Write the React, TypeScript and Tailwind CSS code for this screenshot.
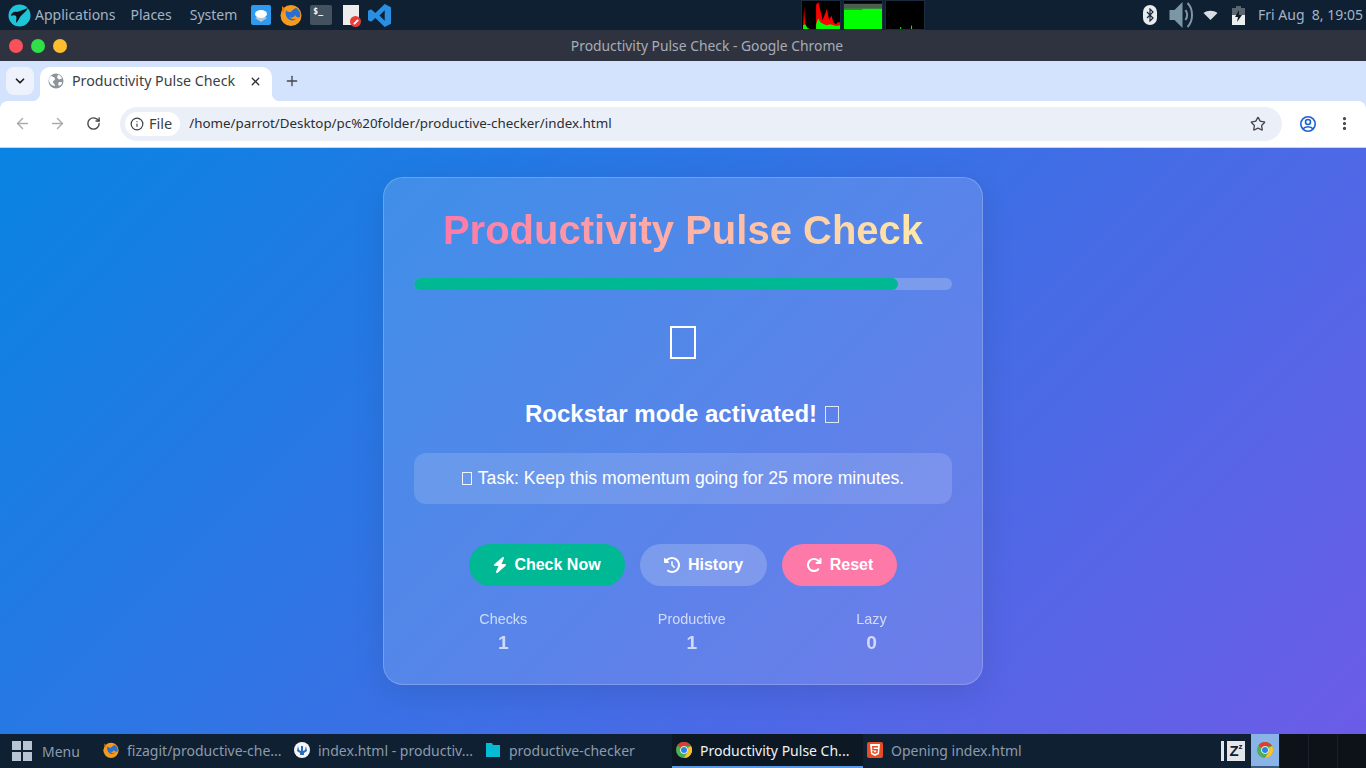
import React from 'react';
import { FaBolt, FaClockRotateLeft, FaArrowRotateRight } from 'react-icons/fa6';
import { ArrowLeft, ArrowRight, RotateCw, Info, Star, EllipsisVertical, ChevronDown, X, Plus } from 'lucide-react';

const ParrotLogo = () => (
  <svg width="23" height="23" viewBox="0 0 23 23" className="shrink-0">
    <circle cx="11.500" cy="11.500" r="11" fill="#1cc5d8" />
    <path d="M3 12c0-3 3-5 6-4 4-1 8-3 11-4-2 4-6 6-8 9-1 2-2 4-4 6 0-3 1-5 0-7-1-1-3-1-5 0z" fill="#10121c" />
  </svg>
);

const FirefoxIcon = ({ size = 22 }: { size?: number }) => (
  <svg width={size} height={size} viewBox="0 0 22 22" className="shrink-0">
    <circle cx="11" cy="11.500" r="10.500" fill="#f59a1c" />
    <path d="M6 6c1 2 3 2 5 2 1-2 3-3 5-4 3 2 5 5 4 9-2 1-4 0-5-2-1 3-4 3-6 2 2 2 6 3 8 1-2 2-4 3-7 2-4-2-5-6-4-10z" fill="#2a6fcf" />
    <path d="M2 2c0 3 0 5 1 7l2-4z" fill="#f07a1a" />
  </svg>
);

const ChromeIcon = ({ size = 16 }: { size?: number }) => (
  <svg width={size} height={size} viewBox="0 0 16 16" className="shrink-0">
    <circle cx="8" cy="8" r="8" fill="#4caf50" />
    <path d="M8 0a8 8 0 0 1 7 4H8a4 4 0 0 0-3.600 2.200L1.600 3A8 8 0 0 1 8 0z" fill="#e53935" />
    <path d="M15 4a8 8 0 0 1-7 12l3.500-6A4 4 0 0 0 11.500 6z" fill="#fbc02d" />
    <circle cx="8" cy="8" r="3.800" fill="#fff" />
    <circle cx="8" cy="8" r="3" fill="#2f80ed" />
  </svg>
);

const GlobeIcon = () => (
  <svg width="16" height="16" viewBox="0 0 16 16" className="shrink-0">
    <circle cx="8" cy="8" r="7.500" fill="#8d949c" />
    <path d="M3 3c2 1 4 1 4 3s-2 1-2 3 2 1 2 4c-3 0-6-3-6-6 0-2 1-3 2-4zM10 1.500c2 .5 4 3 4 4l-3 1-2-2zM11 9l3 0c0 2-1 3-3 4-1-1-1-3 0-4z" fill="#fff" />
  </svg>
);

const MonitorGraph = ({ children }: { children: React.ReactNode }) => (
  <svg width="38" height="28" viewBox="0 0 35 29" preserveAspectRatio="none" className="block bg-black border border-[#1c2a3e] box-content">
    {children}
  </svg>
);

const Tofu = ({ className }: { className: string }) => (
  <span className={`inline-block border-white align-middle shrink-0 ${className}`} />
);

const TaskItem = ({ icon, label, active }: { icon: React.ReactNode; label: string; active?: boolean }) => (
  <div className={`w-[191px] h-full flex items-center gap-2 pl-1 shrink-0 border-b-2 ${active ? 'bg-[#0c1823] border-[#5b9ae4] text-[#f0f3f6]' : 'border-transparent text-[#8c9bab]'}`}>
    {icon}
    <span className="whitespace-nowrap">{label}</span>
  </div>
);

const App: React.FC = () => {
  return (
    <div className="h-[768px] w-[1366px] overflow-hidden flex flex-col bg-[#d3e3fd] font-['Noto_Sans',sans-serif]">
      {/* system panel */}
      <div className="h-[30px] bg-[#0f2033] flex items-center text-[14px] text-[#a4b3c4] shrink-0">
        <div className="pl-2 flex items-center gap-1">
          <ParrotLogo />
          <span className="mb-[2px]">Applications</span>
        </div>
        <span className="ml-[15px] mb-[2px]">Places</span>
        <span className="ml-[18px] mb-[2px]">System</span>
        <div className="ml-[14px] flex items-center">
          <div className="w-5 h-5 rounded-[2px] bg-[#2e9bf0] flex items-center justify-center">
            <svg width="14" height="14" viewBox="0 0 14 14">
              <path d="M7 7l6 3-6 4-6-4z" fill="#b9c3d0" />
              <ellipse cx="7" cy="6" rx="6" ry="4" fill="#fff" />
            </svg>
          </div>
          <div className="ml-[9px]">
            <FirefoxIcon />
          </div>
          <div className="ml-2 w-[22px] h-5 rounded-[2px] bg-[#43525e] text-[8px] leading-none text-white font-bold pl-[3px] pt-[3px] font-['DejaVu_Sans_Mono',monospace]">$_</div>
          <div className="relative ml-[11px] w-4 h-5 bg-[#ededed]">
            <div className="absolute -right-[2px] -bottom-[2px] w-[11px] h-[11px] rounded-full bg-[#ef3b36] flex items-center justify-center">
              <div className="w-[6px] h-[2px] bg-white -rotate-45" />
            </div>
          </div>
          <svg width="23" height="23" viewBox="0 0 22 22" className="shrink-0 ml-[9px]">
            <path d="M16 0l6 3v16l-6 3L7 13.500 3 17 0 15.500v-9L3 5l4 3.500zM16 6l-5 5 5 5z" fill="#2a8fe0" fillRule="evenodd" />
          </svg>
        </div>
        <div className="ml-[410px] flex items-center gap-[2px]">
          <MonitorGraph>
            <polygon points="1,29 1,26 2,6 3,26 5,28 7,29" fill="#ff0000" />
            <polygon points="13,29 13,4 15,1 17,10 19,20 21,14 23,8 25,20 27,15 29,22 31,24 33,22 35,22 35,29" fill="#ff0000" />
            <polygon points="1,29 1,25 3,24 5,28 7,29" fill="#00ff00" />
            <polygon points="13,29 13,24 15,18 17,22 20,24 23,25 26,24 29,25 32,26 35,25 35,29" fill="#00ff00" />
          </MonitorGraph>
          <MonitorGraph>
            <rect x="0" y="3" width="35" height="26" fill="#00ff00" />
            <rect x="0" y="3" width="35" height="5" fill="#4d5d4d" />
            <rect x="0" y="8" width="17" height="1" fill="#4d5d4d" />
          </MonitorGraph>
          <MonitorGraph>
            <rect x="13" y="27" width="1" height="2" fill="#00ff00" />
            <rect x="23" y="26" width="1" height="3" fill="#00ff00" />
            <rect x="23" y="25" width="1" height="1" fill="#ff0000" />
          </MonitorGraph>
        </div>
        <div className="ml-auto flex items-center pr-[3px]">
          <div className="w-[14px] h-5 rounded-[7px] bg-[#e8ecef] flex items-center justify-center">
            <svg width="8" height="14" viewBox="0 0 8 14" fill="none" stroke="#1b2a3a" strokeWidth="1.200">
              <path d="M1 4l6 6-3 3V1l3 3-6 6" />
            </svg>
          </div>
          <svg width="29" height="30" viewBox="0 0 28 30" className="ml-[11px]">
            <path d="M1 10h5l8-8v26l-8-8H1z" fill="#7b97a6" />
            <path d="M17 10c2 3 2 7 0 10" fill="none" stroke="#7b97a6" strokeWidth="2" />
            <path d="M19 3c6 6 6 18 0 24" fill="none" stroke="#7b97a6" strokeWidth="2" />
          </svg>
          <svg width="15" height="10" viewBox="0 0 14 10" className="ml-[6px]">
            <path d="M0 3c4-3 10-3 14 0L7 10z" fill="#d8dde2" />
          </svg>
          <svg width="15" height="19" viewBox="0 0 13 19" className="ml-[13px]">
            <path d="M4 0h5v2h4v17H0V2h4z" fill="#5c6670" />
            <path d="M0 9h13v10H0z" fill="#eceff1" />
            <path d="M7 4L3 11h3l-1 5 5-7H7z" fill="#101c28" />
          </svg>
          <span className="ml-3 mb-[2px] whitespace-pre">Fri Aug  8, 19:05</span>
        </div>
      </div>

      {/* window title */}
      <div className="h-[31px] bg-[#2f3340] flex items-center relative shrink-0">
        <div className="flex gap-2 pl-[9px]">
          <div className="w-[14px] h-[14px] rounded-full bg-[#f9515b]" />
          <div className="w-[14px] h-[14px] rounded-full bg-[#2fe048]" />
          <div className="w-[14px] h-[14px] rounded-full bg-[#fdbd2e]" />
        </div>
        <span className="absolute inset-x-0 pl-[48px] pt-[2px] text-center text-[13.850px] text-[#a7adb6]">Productivity Pulse Check - Google Chrome</span>
      </div>

      {/* tab strip */}
      <div className="h-[40px] bg-[#d3e3fd] flex items-start shrink-0 pt-[6px] pl-[6px]">
        <div className="w-[28px] h-[28px] rounded-lg bg-[#edf2fc] flex items-center justify-center">
          <ChevronDown size={14} strokeWidth={3} className="text-[#1f1f1f]" />
        </div>
        <div className="relative ml-[6px] w-[232px] h-[34px] bg-white rounded-t-[10px] flex items-center pl-2 pr-[10px] pb-[6px] text-[14.250px] text-[#3d4043]">
          <div className="absolute -left-2 bottom-0 w-2 h-2 bg-[radial-gradient(circle_at_0_0,#d3e3fd_8px,#ffffff_8.500px)]" />
          <div className="absolute -right-2 bottom-0 w-2 h-2 bg-[radial-gradient(circle_at_100%_0,#d3e3fd_8px,#ffffff_8.500px)]" />
          <GlobeIcon />
          <span className="ml-2 whitespace-nowrap">Productivity Pulse Check</span>
          <X size={13} strokeWidth={2.500} className="ml-auto text-[#2f3133]" />
        </div>
        <Plus size={16} strokeWidth={2} className="ml-[12px] mt-[6px] text-[#444746]" />
      </div>

      {/* toolbar */}
      <div className="h-[47px] bg-white rounded-t-[8px] flex items-center shrink-0 border-b border-[#c9d4e6] pb-px">
        <ArrowLeft size={17} className="ml-[14px] text-[#a9acaf]" />
        <ArrowRight size={17} className="ml-[18px] text-[#a9acaf]" />
        <RotateCw size={15} strokeWidth={2.200} className="ml-[20px] text-[#45484b]" />
        <div className="ml-[19px] w-[1162px] h-[34px] bg-[#ebeff8] rounded-full flex items-center pl-[5px] pr-4 text-[#1f1f1f]">
          <div className="h-6 bg-white rounded-full flex items-center px-[5px] gap-[5px]">
            <Info size={14} className="text-[#3c3f42]" />
            <span className="text-[#3c3f42] pr-[3px] text-[14.500px]">File</span>
          </div>
          <span className="ml-[9px] text-[#2b2e31] text-[13.350px]">/home/parrot/Desktop/pc%20folder/productive-checker/index.html</span>
          <Star size={16} strokeWidth={2} className="ml-auto text-[#45484b]" />
        </div>
        <svg width="18" height="18" viewBox="0 0 18 18" fill="none" stroke="#1a62d0" strokeWidth="1.600" className="ml-[17px]">
          <circle cx="9" cy="9" r="7.200" />
          <circle cx="9" cy="7" r="2.500" />
          <path d="M4 14c2-3 8-3 10 0" />
        </svg>
        <EllipsisVertical size={17} strokeWidth={2.500} className="ml-[19px] text-[#3c3f42]" />
      </div>

      {/* page */}
      <div className="flex-1 bg-[linear-gradient(135deg,#0984e3,#6c5ce7)] flex justify-center items-start pt-[29px] font-['Liberation_Sans',sans-serif]">
        <div className="w-[600px] h-[508px] rounded-[20px] bg-white/15 border border-white/20 shadow-[0_8px_32px_rgba(0,0,0,0.1)] p-[30px] text-white text-center">
          <h1 className="text-[40px] leading-[44px] font-bold bg-[linear-gradient(to_right,#fd79a8,#ffeaa7)] bg-clip-text text-transparent w-fit mx-auto">
            Productivity Pulse Check
          </h1>
          <div className="mt-[26px] h-3 rounded-full bg-white/20 overflow-hidden">
            <div className="h-full w-[90%] rounded-full bg-[#00b894]" />
          </div>
          <div className="mt-[36px] h-[33px] flex justify-center">
            <Tofu className="w-[26px] h-[33px] border-2" />
          </div>
          <h2 className="mt-[41px] text-2xl leading-[28px] font-bold flex items-center justify-center gap-2 pr-[2px]">
            Rockstar mode activated!
            <Tofu className="w-[14px] h-[17px] border-[1.500px] opacity-80" />
          </h2>
          <div className="mt-[25px] h-[51px] rounded-xl bg-white/15 flex items-center justify-center gap-[6px] text-[17.600px]">
            <Tofu className="w-[10px] h-[13px] border opacity-90" />
            Task: Keep this momentum going for 25 more minutes.
          </div>
          <div className="mt-[40px] flex justify-center gap-[15px] text-base font-bold">
            <button className="h-[42px] w-[156px] rounded-full bg-[#00b894] flex items-center justify-center gap-[7px]">
              <FaBolt size={16} className="w-[14px]" />
              Check Now
            </button>
            <button className="h-[42px] w-[127px] rounded-full bg-white/20 flex items-center justify-center gap-2">
              <FaClockRotateLeft size={16} />
              History
            </button>
            <button className="h-[42px] w-[115px] rounded-full bg-[#fd79a8] flex items-center justify-center gap-2">
              <FaArrowRotateRight size={16} />
              Reset
            </button>
          </div>
          <div className="mt-[25px] flex justify-around opacity-70">
            {[['Checks', '1'], ['Productive', '1'], ['Lazy', '0']].map(([label, value]) => (
              <div key={label}>
                <div className="text-[14.400px] leading-[17px]">{label}</div>
                <div className="mt-1 text-[19.200px] leading-[22px] font-bold">{value}</div>
              </div>
            ))}
          </div>
        </div>
      </div>

      {/* taskbar */}
      <div className="h-[34px] bg-[#0f2033] flex items-center text-[14px] text-[#8c9bab] shrink-0">
        <div className="w-[99px] shrink-0 flex items-center pl-3 gap-[10px]">
          <div className="grid grid-cols-2 gap-[2px]">
            <div className="w-[9px] h-[9px] bg-[#b9c4d2]" />
            <div className="w-[9px] h-[9px] bg-[#b9c4d2]" />
            <div className="w-[9px] h-[9px] bg-[#b9c4d2]" />
            <div className="w-[9px] h-[9px] bg-[#b9c4d2]" />
          </div>
          <span>Menu</span>
        </div>
        <TaskItem icon={<FirefoxIcon size={16} />} label="fizagit/productive-che..." />
        <TaskItem
          icon={
            <svg width="16" height="16" viewBox="0 0 16 16" className="shrink-0">
              <circle cx="8" cy="8" r="8" fill="#f4f6f8" />
              <path d="M4 4l1 4 2 1V4h2v5l2-1 1-4 1 5-3 2v2H6v-2L3 9z" fill="#2b6cb8" />
            </svg>
          }
          label="index.html - productiv..."
        />
        <TaskItem
          icon={
            <svg width="16" height="16" viewBox="0 0 16 16" className="shrink-0">
              <path d="M1 1h6l1 2h7v12H1z" fill="#06bcd4" />
            </svg>
          }
          label="productive-checker"
        />
        <TaskItem icon={<ChromeIcon />} label="Productivity Pulse Ch..." active />
        <TaskItem
          icon={
            <div className="w-4 h-4 rounded-[2px] bg-[#e44d26] flex items-center justify-center shrink-0">
              <svg width="10" height="12" viewBox="0 0 10 12">
                <path d="M0 0h10l-1 10-4 2-4-2z" fill="#fff" />
                <path d="M2 2h6v1.500H3.500l.1 1.500H8l-.4 4L5 10l-2.600-1-.2-2h1.500l.1 1 1.200.4 1.200-.4.100-1.500H2.300z" fill="#e44d26" />
              </svg>
            </div>
          }
          label="Opening index.html"
        />
        <div className="ml-auto flex items-center h-full">
          <div className="flex items-stretch h-5 mr-[6px] gap-[3px]">
            <div className="w-[3px] bg-[#e4e7ea]" />
            <div className="w-[18px] bg-[#e4e7ea] flex items-start justify-center text-[#0f2033] font-bold leading-none pt-[2px] font-['Liberation_Sans',sans-serif]">
              <span className="text-[15px]">Z</span>
              <span className="text-[8px]">z</span>
            </div>
          </div>
          <div className="w-[28px] h-full bg-[#8ab4e8] flex items-center justify-center border-b-2 border-[#3d5a80] mr-px">
            <ChromeIcon size={16} />
          </div>
          <div className="w-[29px] h-full bg-[#0c1218] border-r border-[#182028]" />
          <div className="w-[29px] h-full bg-[#0c1218] border-r border-[#182028]" />
          <div className="w-[28px] h-full bg-[#0c1218]" />
        </div>
      </div>
    </div>
  );
};

export default App;
